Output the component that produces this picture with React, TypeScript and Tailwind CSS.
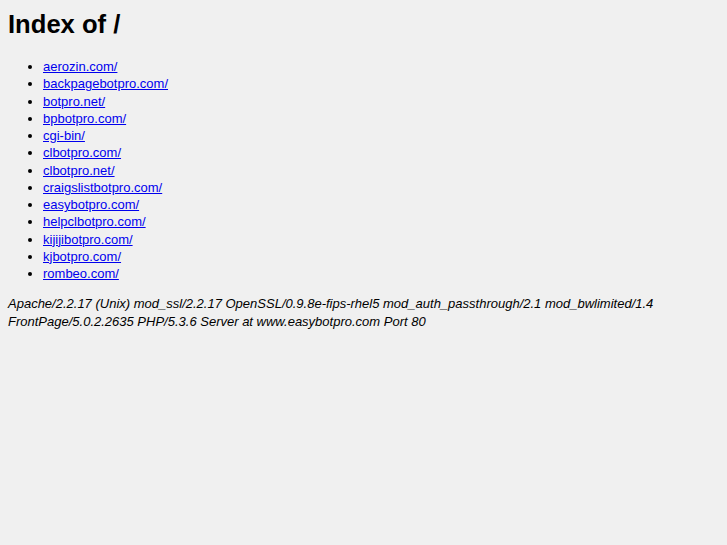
const entries = [
  "aerozin.com/",
  "backpagebotpro.com/",
  "botpro.net/",
  "bpbotpro.com/",
  "cgi-bin/",
  "clbotpro.com/",
  "clbotpro.net/",
  "craigslistbotpro.com/",
  "easybotpro.com/",
  "helpclbotpro.com/",
  "kijijibotpro.com/",
  "kjbotpro.com/",
  "rombeo.com/",
];

export default function App() {
  return (
    <div className="min-h-[545px] bg-[#f0f0f0] px-2 pt-[9px] text-black font-['Liberation_Sans',Arial,sans-serif]">
      <h1 className="text-[25.6px] font-bold leading-[30px]">Index of /</h1>

      <ul className="mt-[19px] list-disc pl-[35px] text-[13px] leading-[17.25px]">
        {entries.map((name) => (
          <li key={name}>
            <a href={"/" + name} className="text-[#0000ee] underline">
              {name}
            </a>
          </li>
        ))}
      </ul>

      <address className="mt-[13px] text-[13px] leading-[18px] italic">
        Apache/2.2.17 (Unix) mod_ssl/2.2.17 OpenSSL/0.9.8e-fips-rhel5 mod_auth_passthrough/2.1 mod_bwlimited/1.4
        FrontPage/5.0.2.2635 PHP/5.3.6 Server at www.easybotpro.com Port 80
      </address>
    </div>
  );
}
